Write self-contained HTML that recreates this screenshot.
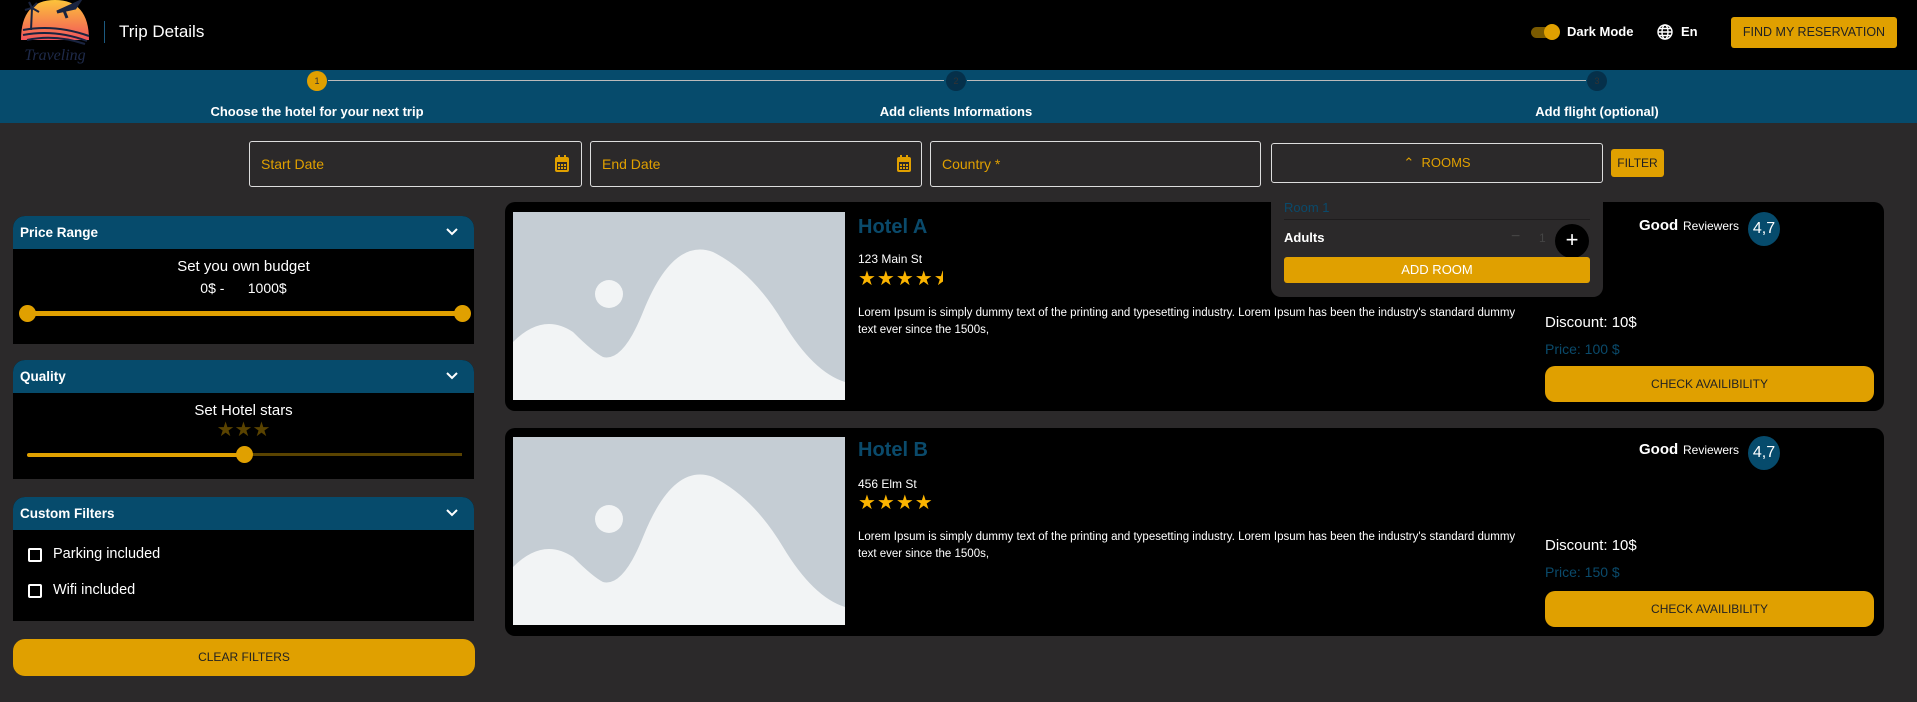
<!DOCTYPE html>
<html><head><meta charset="utf-8">
<style>
*{box-sizing:border-box;margin:0;padding:0}
body{width:1917px;height:702px;background:#2b292a;font-family:"Liberation Sans",Arial,sans-serif;position:relative;overflow:hidden;color:#fff}
.a{position:absolute}
.hdr{left:0;top:0;width:1917px;height:70px;background:#000}
.step{left:0;top:70px;width:1917px;height:53px;background:#064b6c}
.circ{width:20px;height:20px;border-radius:50%;font-size:9px;text-align:center;line-height:20px}
.lbl{font-size:13px;font-weight:bold;transform:translateX(-50%);white-space:nowrap;top:104px}
.inp{border:1px solid #ddd;border-radius:3px;height:46px;top:141px;color:#e0a000;font-size:14px;padding:14px 11px}
.btn{background:#e0a000;color:#222;text-align:center}
.side{left:13px;width:461px;background:#000}
.sh{background:#064b6c;border-radius:12px 12px 0 0;height:33px;font-weight:bold;font-size:13.5px;padding:9px 7px;position:relative}
.sh svg{position:absolute;right:16px;top:12px}
.card{left:505px;width:1379px;background:#000;border-radius:10px}
.img{left:8px;width:332px;height:188px;background:#c5cdd4;overflow:hidden}
.ttl{color:#0a4a6b;font-weight:bold;font-size:20px;left:353px}
.sm{font-size:12px;left:353px}
.lor{font-size:11.5px;left:353px;line-height:17px;width:660px}
.stars{left:353px;color:#fbb400;font-size:20px;letter-spacing:1px;font-family:"DejaVu Sans",sans-serif}
</style></head><body>
<div class="a hdr"></div>
<svg class="a" style="left:17px;top:0" width="76" height="66" viewBox="0 0 76 66">
<defs><linearGradient id="g" x1="0" y1="0" x2="0" y2="1"><stop offset="0" stop-color="#fcc33a"/><stop offset="1" stop-color="#f2545b"/></linearGradient></defs>
<path d="M4 40 Q4 0 38 0 Q72 0 72 40 Z" fill="url(#g)"/>
<path d="M6 30 Q38 24 72 36 M6 35 Q38 29 70 41 M10 40 Q38 34 68 44" stroke="#1a2440" stroke-width="2" fill="none"/>
<path d="M14 30 L15 8 M15 8 L8 10 M15 8 L22 12 M15 8 L12 2 M15 8 L20 3" stroke="#1a2440" stroke-width="2"/>
<path d="M40 12 L62 2 L58 8 Z M46 8 L50 18" stroke="#1a2440" stroke-width="3" fill="#1a2440"/>
<text x="38" y="60" font-family="Liberation Serif,serif" font-style="italic" font-size="16" fill="#1e2a4a" text-anchor="middle">Traveling</text>
</svg>
<div class="a" style="left:104px;top:21px;width:1px;height:22px;background:#1c5a80"></div>
<div class="a" style="left:119px;top:22px;font-size:17px">Trip Details</div>
<div class="a" style="left:1531px;top:27px;width:26px;height:11px;border-radius:6px;background:#7a5a00"></div>
<div class="a" style="left:1544px;top:24px;width:16px;height:16px;border-radius:50%;background:#e0a000"></div>
<div class="a" style="left:1567px;top:24px;font-size:13px;font-weight:bold">Dark Mode</div>
<svg class="a" style="left:1657px;top:24px" width="16" height="16" viewBox="0 0 16 16" fill="none" stroke="#fff" stroke-width="1.4"><circle cx="8" cy="8" r="7"/><ellipse cx="8" cy="8" rx="3" ry="7"/><path d="M1 8h14M2 4.5h12M2 11.5h12"/></svg>
<div class="a" style="left:1681px;top:24px;font-size:13px;font-weight:bold">En</div>
<div class="a btn" style="left:1731px;top:17px;width:166px;height:31px;border-radius:3px;font-size:12.5px;line-height:31px">FIND MY RESERVATION</div>

<div class="a step"></div>
<div class="a" style="left:328px;top:80px;width:616px;height:1px;background:#bbb"></div>
<div class="a" style="left:967px;top:80px;width:619px;height:1px;background:#bbb"></div>
<div class="a circ" style="left:307px;top:71px;background:#e0a000;color:#333">1</div>
<div class="a circ" style="left:946px;top:71px;background:#05304a;color:#333">2</div>
<div class="a circ" style="left:1587px;top:71px;background:#05304a;color:#333">3</div>
<div class="a lbl" style="left:317px">Choose the hotel for your next trip</div>
<div class="a lbl" style="left:956px">Add clients Informations</div>
<div class="a lbl" style="left:1597px">Add flight (optional)</div>

<div class="a inp" style="left:249px;width:333px">Start Date</div>
<div class="a inp" style="left:590px;width:332px">End Date</div>
<div class="a inp" style="left:930px;width:331px">Country *</div>
<svg class="a" style="left:555px;top:155px" width="14" height="17" viewBox="0 0 14 17" fill="#e0a000"><rect x="0" y="2" width="14" height="15" rx="2"/><rect x="2" y="7" width="10" height="8" fill="#2b292a"/><rect x="3" y="0" width="2" height="4"/><rect x="9" y="0" width="2" height="4"/><rect x="3" y="9" width="2" height="2"/><rect x="6" y="9" width="2" height="2"/><rect x="9" y="9" width="2" height="2"/><rect x="3" y="12" width="2" height="2"/><rect x="6" y="12" width="2" height="2"/><rect x="9" y="12" width="2" height="2"/></svg>
<svg class="a" style="left:897px;top:155px" width="14" height="17" viewBox="0 0 14 17" fill="#e0a000"><rect x="0" y="2" width="14" height="15" rx="2"/><rect x="2" y="7" width="10" height="8" fill="#2b292a"/><rect x="3" y="0" width="2" height="4"/><rect x="9" y="0" width="2" height="4"/><rect x="3" y="9" width="2" height="2"/><rect x="6" y="9" width="2" height="2"/><rect x="9" y="9" width="2" height="2"/><rect x="3" y="12" width="2" height="2"/><rect x="6" y="12" width="2" height="2"/><rect x="9" y="12" width="2" height="2"/></svg>
<div class="a" style="left:1271px;top:143px;width:332px;height:40px;border:1px solid #ddd;border-radius:3px;color:#e0a000;font-size:13px;text-align:center;line-height:38px">⌃&nbsp;&nbsp;ROOMS</div>
<div class="a btn" style="left:1611px;top:149px;width:53px;height:28px;border-radius:3px;font-size:12px;line-height:28px">FILTER</div>

<div class="a side" style="top:216px;height:128px;border-radius:12px 12px 0 0">
<div class="sh">Price Range<svg width="12" height="8" viewBox="0 0 12 8"><path d="M1 1l5 5 5-5" stroke="#fff" stroke-width="2" fill="none"/></svg></div>
<div style="text-align:center;font-size:15px;margin-top:9px">Set you own budget</div>
<div style="text-align:center;font-size:14px;margin-top:5px">0$ -&nbsp;&nbsp;&nbsp;&nbsp;&nbsp;&nbsp;1000$</div>
</div>
<div class="a" style="left:27px;top:311px;width:435px;height:5px;background:#e0a000;border-radius:3px"></div>
<div class="a" style="left:19px;top:305px;width:17px;height:17px;border-radius:50%;background:#e0a000"></div>
<div class="a" style="left:454px;top:305px;width:17px;height:17px;border-radius:50%;background:#e0a000"></div>

<div class="a side" style="top:360px;height:119px;border-radius:12px 12px 0 0">
<div class="sh">Quality<svg width="12" height="8" viewBox="0 0 12 8"><path d="M1 1l5 5 5-5" stroke="#fff" stroke-width="2" fill="none"/></svg></div>
<div style="text-align:center;font-size:15px;margin-top:9px">Set Hotel stars</div>
<div style="text-align:center;font-size:20px;line-height:20px;color:#5a4300;font-family:'DejaVu Sans',sans-serif">★★★</div>
</div>
<div class="a" style="left:27px;top:453px;width:218px;height:4px;background:#e0a000;border-radius:2px"></div>
<div class="a" style="left:245px;top:453px;width:217px;height:3px;background:#5a4300"></div>
<div class="a" style="left:236px;top:446px;width:17px;height:17px;border-radius:50%;background:#e0a000"></div>

<div class="a side" style="top:497px;height:124px;border-radius:12px 12px 0 0">
<div class="sh">Custom Filters<svg width="12" height="8" viewBox="0 0 12 8"><path d="M1 1l5 5 5-5" stroke="#fff" stroke-width="2" fill="none"/></svg></div>
</div>
<div class="a" style="left:28px;top:548px;width:14px;height:14px;border:2px solid #fff;border-radius:2px"></div>
<div class="a" style="left:53px;top:546px;font-size:14.5px">Parking included</div>
<div class="a" style="left:28px;top:584px;width:14px;height:14px;border:2px solid #fff;border-radius:2px"></div>
<div class="a" style="left:53px;top:582px;font-size:14.5px">Wifi included</div>
<div class="a btn" style="left:13px;top:639px;width:462px;height:37px;border-radius:12px;font-size:12px;line-height:37px">CLEAR FILTERS</div>

<div class="a card" style="top:202px;height:209px">
<div class="a img" style="top:10px"><svg width="332" height="188" viewBox="0 0 332 188"><ellipse cx="96" cy="82" rx="14" ry="14" fill="#f2f4f5"/><path d="M0 130 Q30 100 60 120 Q80 140 90 145 Q110 150 130 100 Q160 25 200 40 Q240 60 270 110 Q300 160 332 170 L332 188 L0 188 Z" fill="#f2f4f5"/></svg></div>
<div class="a ttl" style="top:14px">Hotel A</div>
<div class="a sm" style="top:50px">123 Main St</div>
<div class="a stars" style="top:64px">★★★★<span style="display:inline-block;width:9px;overflow:hidden;vertical-align:top">★</span></div>
<div class="a lor" style="top:103px">Lorem Ipsum is simply dummy text of the printing and typesetting industry. Lorem Ipsum has been the industry's standard dummy text ever since the 1500s,</div>
<div class="a" style="left:1134px;top:15px;font-weight:bold;font-size:15px">Good</div>
<div class="a" style="left:1178px;top:17px;font-size:12px">Reviewers</div>
<div class="a" style="left:1243px;top:10px;width:32px;height:34px;border-radius:50%;background:#064b6c;font-size:16px;text-align:center;line-height:34px">4,7</div>
<div class="a" style="left:1040px;top:112px;font-size:15px">Discount: 10$</div>
<div class="a" style="left:1040px;top:139px;font-size:14px;color:#0a4a6b">Price: 100 $</div>
<div class="a btn" style="left:1040px;top:164px;width:329px;height:36px;border-radius:10px;font-size:12px;line-height:36px">CHECK AVAILIBILITY</div>
</div>

<div class="a card" style="top:428px;height:208px">
<div class="a img" style="top:9px"><svg width="332" height="188" viewBox="0 0 332 188"><ellipse cx="96" cy="82" rx="14" ry="14" fill="#f2f4f5"/><path d="M0 130 Q30 100 60 120 Q80 140 90 145 Q110 150 130 100 Q160 25 200 40 Q240 60 270 110 Q300 160 332 170 L332 188 L0 188 Z" fill="#f2f4f5"/></svg></div>
<div class="a ttl" style="top:11px">Hotel B</div>
<div class="a sm" style="top:49px">456 Elm St</div>
<div class="a stars" style="top:62px">★★★★</div>
<div class="a lor" style="top:101px">Lorem Ipsum is simply dummy text of the printing and typesetting industry. Lorem Ipsum has been the industry's standard dummy text ever since the 1500s,</div>
<div class="a" style="left:1134px;top:13px;font-weight:bold;font-size:15px">Good</div>
<div class="a" style="left:1178px;top:15px;font-size:12px">Reviewers</div>
<div class="a" style="left:1243px;top:8px;width:32px;height:34px;border-radius:50%;background:#064b6c;font-size:16px;text-align:center;line-height:34px">4,7</div>
<div class="a" style="left:1040px;top:109px;font-size:15px">Discount: 10$</div>
<div class="a" style="left:1040px;top:136px;font-size:14px;color:#0a4a6b">Price: 150 $</div>
<div class="a btn" style="left:1040px;top:163px;width:329px;height:36px;border-radius:10px;font-size:12px;line-height:36px">CHECK AVAILIBILITY</div>
</div>

<div class="a" style="left:1271px;top:196px;width:332px;height:101px;background:#2b292a;border-radius:0 0 10px 10px">
<div class="a" style="left:13px;top:4px;font-size:13px;color:#0a4a6b">Room 1</div>
<div class="a" style="left:13px;top:23px;width:306px;height:1px;background:#1e1c1d"></div>
<div class="a" style="left:13px;top:34px;font-size:13px;font-weight:bold">Adults</div>
<div class="a" style="left:240px;top:32px;font-size:16px;color:#444">−</div>
<div class="a" style="left:268px;top:35px;font-size:12px;color:#444">1</div>
<div class="a" style="left:284px;top:28px;width:34px;height:34px;border-radius:50%;background:#000;text-align:center;line-height:32px;font-size:22px">+</div>
<div class="a btn" style="left:13px;top:61px;width:306px;height:26px;border-radius:3px;font-size:13px;line-height:26px;color:#fff">ADD ROOM</div>
</div>
</body></html>
